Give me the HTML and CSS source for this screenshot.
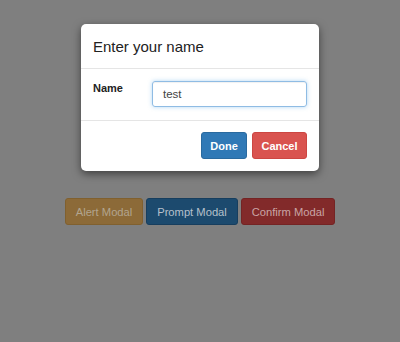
FILE: index.html
```html
<!DOCTYPE html>
<html>
<head>
<meta charset="utf-8">
<link rel="stylesheet" href="styles.css">
</head>
<body>
<div class="page">
  <div class="actions">
    <button class="btn btn-alert">Alert Modal</button>
    <button class="btn btn-prompt">Prompt Modal</button>
    <button class="btn btn-confirm">Confirm Modal</button>
  </div>
</div>
<div class="modal">
  <div class="modal-header">
    <h4 class="modal-title">Enter your name</h4>
  </div>
  <div class="modal-body">
    <label class="field-label">Name</label>
    <div class="field-input">test</div>
  </div>
  <div class="modal-footer">
    <button class="mbtn mbtn-primary">Done</button>
    <button class="mbtn mbtn-danger">Cancel</button>
  </div>
</div>
</body>
</html>
```
FILE: styles.css
```css
html, body {
  margin: 0;
  padding: 0;
  background: #7f7f7f;
  font-family: "Liberation Sans", Arial, sans-serif;
  width: 400px;
  height: 342px;
  overflow: hidden;
}
.page {
  padding-top: 198px;
}
.actions {
  display: flex;
  justify-content: center;
  gap: 3px;
}
.btn {
  font-family: "Liberation Sans", Arial, sans-serif;
  font-size: 11.2px;
  height: 27px;
  padding: 0;
  white-space: nowrap;
  border-radius: 3px;
  border: 1px solid transparent;
  cursor: pointer;
}
.btn-alert {
  background: #8c6a38;
  border-color: #80602f;
  color: #b2a58f;
  width: 78px;
}
.btn-prompt {
  background: #1c4a6e;
  border-color: #173e5e;
  color: #b6c0cb;
  width: 92px;
}
.btn-confirm {
  background: #822a2a;
  border-color: #742424;
  color: #c9a5a5;
  width: 94px;
}
.modal {
  position: absolute;
  top: 24px;
  left: 81px;
  width: 238px;
  height: 147px;
  background: #fff;
  border-radius: 5px;
  box-shadow: 0 3px 9px rgba(0,0,0,0.5);
  box-sizing: border-box;
}
.modal-header {
  padding: 13px 12px 12px;
  border-bottom: 1px solid #e5e5e5;
}
.modal-title {
  margin: 0;
  font-size: 15px;
  line-height: 19px;
  font-weight: normal;
  color: #222;
}
.modal-body {
  padding: 12px 12px 13px 12px;
  display: flex;
  align-items: flex-start;
  border-bottom: 1px solid #e5e5e5;
}
.field-label {
  font-size: 11px;
  font-weight: bold;
  line-height: 16px;
  margin-top: -1px;
  width: 59px;
  color: #222;
}
.field-input {
  flex: 1;
  height: 26px;
  box-sizing: border-box;
  border: 1px solid #8fbce4;
  border-radius: 3px;
  box-shadow: inset 0 1px 1px rgba(0,0,0,.06), 0 0 4px rgba(102,175,233,.5);
  padding: 0 10px;
  font-size: 11.5px;
  line-height: 24px;
  color: #444;
}
.modal-footer {
  padding: 11px 12px 12px;
  display: flex;
  justify-content: flex-end;
  gap: 5px;
}
.mbtn {
  font-family: "Liberation Sans", Arial, sans-serif;
  font-size: 11px;
  font-weight: bold;
  height: 27px;
  border-radius: 3px;
  border: 1px solid transparent;
  color: #fff;
  padding: 0;
}
.mbtn-primary {
  width: 46px;
  background: #3079b6;
  border-color: #2a6a9f;
}
.mbtn-danger {
  width: 55px;
  background: #d9534f;
  border-color: #cc4642;
}
```
